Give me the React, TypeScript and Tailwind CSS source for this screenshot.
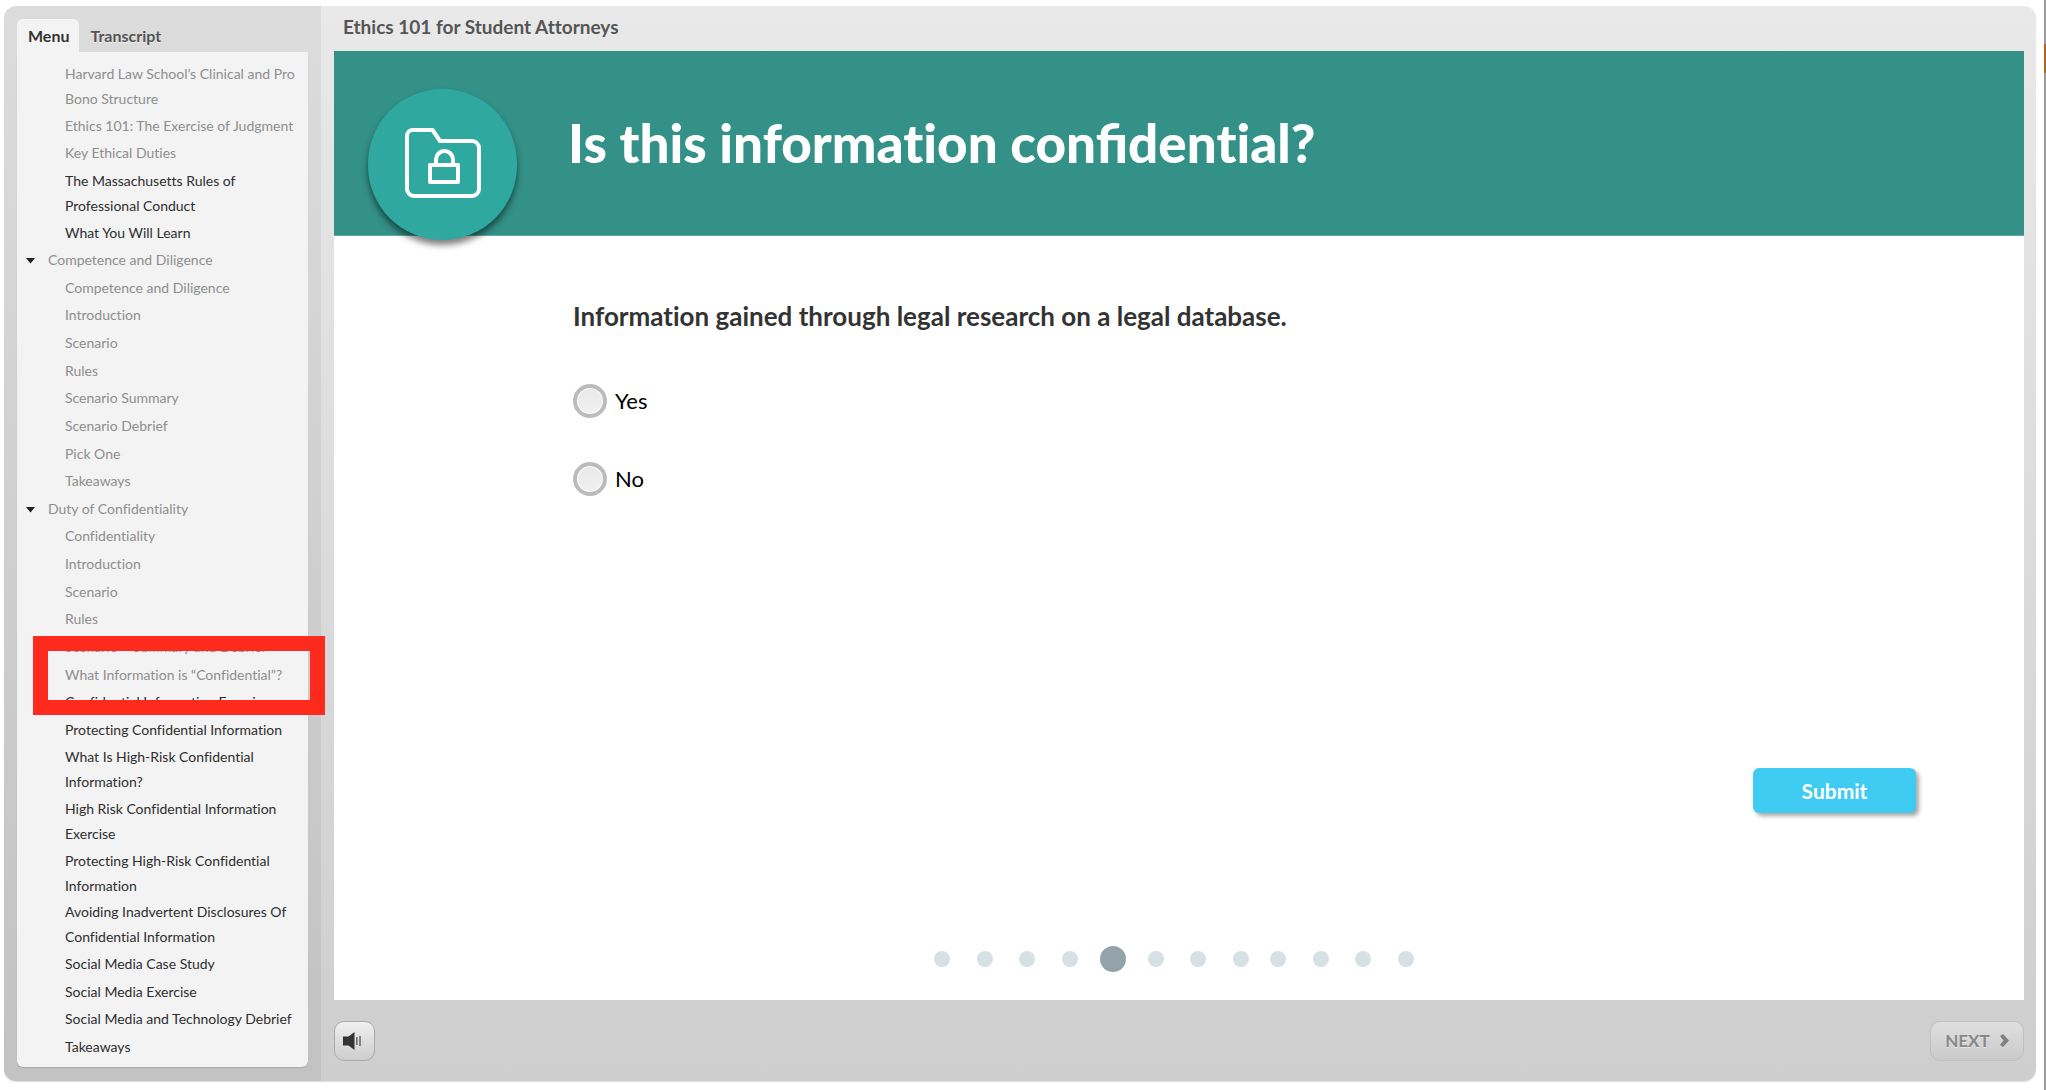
import { useState } from "react";

type Row = { text: string; done?: boolean; section?: boolean; double?: boolean; marked?: boolean };

const rows: Row[] = [
  { text: "Harvard Law School’s Clinical and Pro Bono Structure", done: true, double: true },
  { text: "Ethics 101: The Exercise of Judgment", done: true },
  { text: "Key Ethical Duties", done: true },
  { text: "The Massachusetts Rules of Professional Conduct", double: true },
  { text: "What You Will Learn" },
  { text: "Competence and Diligence", done: true, section: true },
  { text: "Competence and Diligence", done: true },
  { text: "Introduction", done: true },
  { text: "Scenario", done: true },
  { text: "Rules", done: true },
  { text: "Scenario Summary", done: true },
  { text: "Scenario Debrief", done: true },
  { text: "Pick One", done: true },
  { text: "Takeaways", done: true },
  { text: "Duty of Confidentiality", done: true, section: true },
  { text: "Confidentiality", done: true },
  { text: "Introduction", done: true },
  { text: "Scenario", done: true },
  { text: "Rules", done: true },
  { text: "Scenario – Summary and Debrief", done: true },
  { text: "What Information is “Confidential”?", done: true, marked: true },
  { text: "Confidential Information Exercise" },
  { text: "Protecting Confidential Information" },
  { text: "What Is High-Risk Confidential Information?", double: true },
  { text: "High Risk Confidential Information Exercise", double: true },
  { text: "Protecting High-Risk Confidential Information", double: true },
  { text: "Avoiding Inadvertent Disclosures Of Confidential Information", double: true },
  { text: "Social Media Case Study" },
  { text: "Social Media Exercise" },
  { text: "Social Media and Technology Debrief" },
  { text: "Takeaways" },
];

function MenuRow({ row }: { row: Row }) {
  return (
    <li className={row.marked ? "relative z-10" : ""}>
      <button
        type="button"
        className={`flex w-full text-left text-[14px] leading-[25px] ${row.double ? "pb-px" : "pb-0.5"} ${
          row.section ? "pl-[9px]" : "pl-12"
        } ${row.done ? "text-[#8e8e8e]" : "text-[#2e2e2e]"}`}
      >
        {row.section && (
          <svg viewBox="0 0 9 6" className="mt-[11px] mr-[13px] h-[6px] w-[9px] shrink-0" aria-hidden="true">
            <path d="M0 0h9L4.500 5.500z" fill="#222" />
          </svg>
        )}
        <span>{row.text}</span>
      </button>
      {row.marked && (
        <span className="pointer-events-none absolute -inset-y-[26px] left-4 -right-[17px] border-[15px] border-[#fd2a1d]" />
      )}
    </li>
  );
}

function Sidebar() {
  return (
    <aside className="relative z-10 flex w-[317px] shrink-0 flex-col rounded-l-xl bg-linear-to-b from-[#dcdcdc] to-[#c2c2c2] p-[13px] pb-[14px]">
      <div className="flex">
        <button type="button" className="h-[33px] rounded-t-md bg-[#f3f3f3] pr-[10px] pl-[11px] text-[16px] font-bold text-[#333]">
          Menu
        </button>
        <button type="button" className="h-[33px] px-[11px] text-[16px] font-bold text-[#555] [text-shadow:0_1px_0_#eee]">
          Transcript
        </button>
      </div>
      <ul className="flex flex-1 flex-col justify-between rounded-b-md bg-[#f3f3f3] pt-[9px] pb-[6px] shadow-[0_1px_1px_rgba(0,0,0,0.15)]">
        {rows.map((row, i) => (
          <MenuRow key={i} row={row} />
        ))}
      </ul>
    </aside>
  );
}

function FolderLock() {
  return (
    <svg viewBox="0 0 76 70" className="mb-[3px] h-[70px] w-[76px]" fill="none" stroke="#fff" strokeWidth="4" aria-hidden="true">
      <path d="M8 2h19.500l7.500 11h32a7 7 0 0 1 7 7v41a7 7 0 0 1-7 7H9a7 7 0 0 1-7-7V8a6 6 0 0 1 6-6z" strokeLinejoin="round" />
      <rect x="25" y="37" width="28" height="17" strokeLinejoin="round" />
      <path d="M31 36v-4.500a8.500 8.500 0 0 1 17 0V36" />
    </svg>
  );
}

function Dot({ active }: { active?: boolean }) {
  return active ? (
    <span className="-m-[5px] size-[26px] rounded-full bg-[#92a3aa]" />
  ) : (
    <span className="size-4 rounded-full bg-[#d6e1e5]" />
  );
}

function Choice({ label, checked, onPick }: { label: string; checked: boolean; onPick: () => void }) {
  return (
    <label className="flex w-fit items-center gap-2 text-[22px] leading-[35px] text-black">
      <input
        type="radio"
        name="answer"
        checked={checked}
        onChange={onPick}
        className="size-[34px] appearance-none rounded-full border-4 border-[#bcbcbc] bg-linear-to-b from-[#e9e9e9] to-[#f1f1f1] shadow-[inset_0_0_0_1px_#fff] checked:bg-[radial-gradient(#444_35%,#eee_38%)]"
      />
      {label}
    </label>
  );
}

export default function App() {
  const [answer, setAnswer] = useState("");
  return (
    <div className="flex h-screen bg-white font-['Lato',sans-serif] [font-variant-ligatures:none]">
      <div className="mt-[6px] mr-2 mb-[9px] ml-1 flex min-w-0 flex-1 rounded-xl shadow-[0_1px_1px_#ddd]">
        <Sidebar />
        <main className="flex min-w-0 flex-1 flex-col rounded-r-xl bg-linear-to-b from-[#e9e9e9] to-[#cecece] pr-3 pl-[13px]">
          <h2 className="h-[45px] px-[9px] text-[19px] leading-[42px] font-bold text-[#555]">
            Ethics 101 for Student Attorneys
          </h2>
          <section className="flex flex-1 flex-col bg-white">
            <header className="flex h-[185px] shrink-0 items-start border-b border-[#5fa9a3] bg-[#339188] pl-[34px]">
              <div className="mt-[38px] flex h-[151px] w-[149px] shrink-0 items-center justify-center rounded-full bg-[#2fa89f] shadow-[0_5px_6px_rgba(0,0,0,0.5)]">
                <FolderLock />
              </div>
              <h1 className="mt-[56px] ml-[51px] text-[53px] leading-[72px] font-black text-white">
                Is this information <span className="[font-variant-ligatures:normal]">confi</span>dential?
              </h1>
            </header>
            <form className="flex flex-1 flex-col" onSubmit={(e) => e.preventDefault()}>
              <fieldset className="flex flex-col gap-[43px] pl-[239px]">
                <legend className="pt-[62px] pb-[49px] text-[26px] leading-9 font-bold text-[#333]">
                  Information gained through legal research on a legal database.
                </legend>
                <Choice label="Yes" checked={answer === "Yes"} onPick={() => setAnswer("Yes")} />
                <Choice label="No" checked={answer === "No"} onPick={() => setAnswer("No")} />
              </fieldset>
              <button
                type="submit"
                className="mt-auto mr-[108px] h-[45px] w-[163px] self-end rounded-md bg-[#40ccf2] text-[21px] font-bold text-white shadow-[3px_3px_4px_rgba(0,0,0,0.35)]"
              >
                Submit
              </button>
              <div className="mt-[138px] mr-[10px] mb-[33px] flex justify-center gap-[21px]">
                <div className="flex w-[315px] justify-between">
                  {[0, 1, 2, 3, 4, 5, 6, 7].map((n) => (
                    <Dot key={n} active={n === 4} />
                  ))}
                </div>
                <div className="flex w-36 justify-between">
                  {[8, 9, 10, 11].map((n) => (
                    <Dot key={n} />
                  ))}
                </div>
              </div>
            </form>
          </section>
          <footer className="flex h-[81px] shrink-0 items-center justify-between">
            <button
              type="button"
              aria-label="Volume"
              className="flex h-10 w-[41px] items-center justify-center rounded-[10px] border border-[#aaa] bg-linear-to-b from-[#f0f0f0] to-[#cdcdcd]"
            >
              <svg viewBox="0 0 18 18" className="mr-[5px] size-[18px]" aria-hidden="true">
                <path d="M0 4.500h5.500L11.500 0v18L5.500 13.500H0z" fill="#333" />
                <path d="M13.800 5v8M17 4v10" stroke="#666" strokeWidth="1.500" />
              </svg>
            </button>
            <button
              type="button"
              className="flex h-10 w-[94px] items-center justify-center gap-[10px] rounded-[10px] border border-[#bfbfbf] bg-linear-to-b from-[#dfdfdf] to-[#cacaca] text-[17px] font-bold text-[#888] [text-shadow:0_1px_0_#e5e5e5]"
            >
              NEXT
              <svg viewBox="0 0 9 13" className="h-[13px] w-[9px]" aria-hidden="true">
                <path d="M0 2L3 0l6 6.500L3 13 0 11l3.500-4.500z" fill="#808080" />
              </svg>
            </button>
          </footer>
        </main>
      </div>
      <div className="flex w-[2px] shrink-0 flex-col bg-[#9a9a9a]">
        <div className="mt-11 h-[29px] bg-[#b0651a]" />
      </div>
    </div>
  );
}
